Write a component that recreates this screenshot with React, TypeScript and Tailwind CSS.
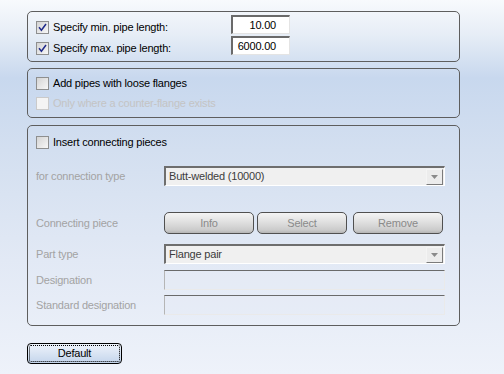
import React from "react";

const font = { fontFamily: '"Liberation Sans", Arial, sans-serif' };

function Check({ checked, disabled }: { checked?: boolean; disabled?: boolean }) {
  return (
    <div
      className={
        "w-[13px] h-[13px] shrink-0 border flex items-center justify-center " +
        (disabled
          ? "border-[#cacaca] bg-[#f4f4f4]"
          : "border-[#8e8f8f] bg-[linear-gradient(135deg,#d4d4d4,#f7f7f7)]")
      }
    >
      {checked && (
        <svg width="9" height="9" viewBox="0 0 9 9">
          <path d="M1 4.2 L3.4 7.2 L8 1" fill="none" stroke="#1f2a8a" strokeWidth="1.5" />
        </svg>
      )}
    </div>
  );
}

function Arrow() {
  return (
    <div className="w-[17px] h-[16px] border border-t-[#f4f4f4] border-l-[#f4f4f4] border-b-[#7b7b7b] border-r-[#7b7b7b] bg-[#ececec] flex items-center justify-center">
      <svg width="7" height="4" viewBox="0 0 7 4">
        <path d="M0 0 H7 L3.5 4 Z" fill="#8a8a8a" />
      </svg>
    </div>
  );
}

function Combo({ text }: { text: string }) {
  return (
    <div className="w-[281px] h-[20px] border-t-2 border-l-2 border-t-[#6e6e6e] border-l-[#6e6e6e] border-b border-r border-b-white border-r-white bg-[#f0f0f0] flex items-center pl-[3px] pr-[1px]">
      <span className="text-[11px] text-[#3c3c3c] leading-none tracking-[-0.2px]">{text}</span>
      <div className="ml-auto">
        <Arrow />
      </div>
    </div>
  );
}

function GrayBtn({ label, w }: { label: string; w: string }) {
  return (
    <div
      className={
        w +
        " h-[22px] rounded-[5px] border border-[#505050] bg-[linear-gradient(to_bottom,#f4f4f4,#e0e0e0_45%,#cbcbcb_85%,#b5b5b5)] flex items-center justify-center text-[11px] text-[#8a8a8a] tracking-[-0.2px]"
      }
    >
      {label}
    </div>
  );
}

function Disabled() {
  return (
    <div className="w-[281px] h-[20px] border-t border-t-[#6a6a6a] border-l border-l-[#b5b5b5] border-b border-b-[#eaeaea] border-r border-r-[#eaeaea] bg-[#e6ecf5]/40" />
  );
}

function Label({ children }: { children: React.ReactNode }) {
  return <div className="w-[128px] text-[11px] text-[#a3a3a3] tracking-[-0.2px]">{children}</div>;
}

export default function App() {
  return (
    <div
      style={font}
      className="w-[504px] h-[374px] overflow-hidden pl-[27px] pt-[11px] bg-[linear-gradient(to_bottom,#f8fafd_0px,#e6edf6_35px,#c8d8ee_78px,#d3dff0_150px,#e2e9f5_260px,#eef2fa_374px)]"
    >
      {/* Group 1 */}
      <div className="w-[433px] h-[51px] border border-[#5e5e5e] rounded-[5px] pt-[3px] pl-[8px] flex flex-col gap-[2px]">
        <div className="h-[19px] flex items-end">
          <div className="w-[195px] flex items-center gap-[4px] h-[13px]">
            <Check checked />
            <span className="text-[11px] text-black leading-none tracking-[-0.2px]">Specify min. pipe length:</span>
          </div>
          <div className="w-[59px] h-[19px] border-t-2 border-l-2 border-t-[#6a6a6a] border-l-[#6a6a6a] border-b border-r border-b-[#e4e4e4] border-r-[#e4e4e4] bg-white flex items-center justify-end pr-[13px] text-[11px] text-black tracking-[-0.2px]">
            10.00
          </div>
        </div>
        <div className="h-[19px] flex items-end">
          <div className="w-[195px] flex items-center gap-[4px] h-[13px]">
            <Check checked />
            <span className="text-[11px] text-black leading-none tracking-[-0.2px]">Specify max. pipe length:</span>
          </div>
          <div className="w-[59px] h-[19px] border-t-2 border-l-2 border-t-[#6a6a6a] border-l-[#6a6a6a] border-b border-r border-b-[#e4e4e4] border-r-[#e4e4e4] bg-white flex items-center justify-end pr-[13px] text-[11px] text-black tracking-[-0.2px]">
            6000.00
          </div>
        </div>
      </div>

      {/* Group 2 */}
      <div className="mt-[6px] w-[433px] h-[50px] border border-[#5e5e5e] rounded-[5px] pt-[8px] pl-[8px] flex flex-col gap-[7px]">
        <div className="h-[13px] flex items-center gap-[4px]">
          <Check />
          <span className="text-[11px] text-black leading-none tracking-[-0.2px]">Add pipes with loose flanges</span>
        </div>
        <div className="h-[13px] flex items-center gap-[4px]">
          <Check disabled />
          <span className="text-[11px] text-[#c4c4c4] leading-none tracking-[-0.2px]">Only where a counter-flange exists</span>
        </div>
      </div>

      {/* Group 3 */}
      <div className="mt-[7px] w-[433px] h-[201px] border border-[#5e5e5e] rounded-[5px] pt-[10px] pl-[8px] flex flex-col">
        <div className="h-[13px] flex items-center gap-[4px]">
          <Check />
          <span className="text-[11px] text-black leading-none tracking-[-0.2px]">Insert connecting pieces</span>
        </div>
        <div className="mt-[17px] h-[20px] flex items-center">
          <Label>for connection type</Label>
          <Combo text="Butt-welded (10000)" />
        </div>
        <div className="mt-[26px] h-[22px] flex items-center">
          <Label>Connecting piece</Label>
          <GrayBtn label="Info" w="w-[90px]" />
          <div className="ml-[3px]">
            <GrayBtn label="Select" w="w-[90px]" />
          </div>
          <div className="ml-[6px]">
            <GrayBtn label="Remove" w="w-[90px]" />
          </div>
        </div>
        <div className="mt-[10px] h-[20px] flex items-center">
          <Label>Part type</Label>
          <Combo text="Flange pair" />
        </div>
        <div className="mt-[6px] h-[20px] flex items-center">
          <Label>Designation</Label>
          <Disabled />
        </div>
        <div className="mt-[5px] h-[20px] flex items-center">
          <Label>Standard designation</Label>
          <Disabled />
        </div>
      </div>

      {/* Default button */}
      <div className="mt-[17px] w-[95px] h-[21px] rounded-[4px] border border-black bg-[linear-gradient(to_bottom,#eef3fb,#d9e4f3_50%,#c4d5ec)] p-[1px]">
        <div className="w-full h-full border border-dotted border-black rounded-[2px] flex items-center justify-center text-[11px] text-black leading-none tracking-[-0.2px]">
          Default
        </div>
      </div>
    </div>
  );
}
